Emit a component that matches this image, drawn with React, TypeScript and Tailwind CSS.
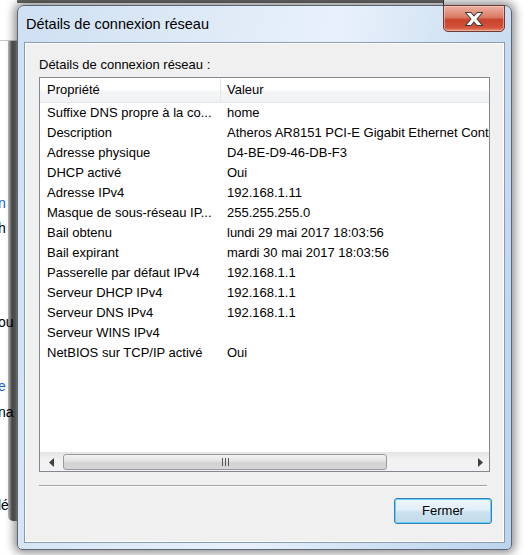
const rows: [string, string][] = [
  ["Suffixe DNS propre à la co...", "home"],
  ["Description", "Atheros AR8151 PCI-E Gigabit Ethernet Controller"],
  ["Adresse physique", "D4-BE-D9-46-DB-F3"],
  ["DHCP activé", "Oui"],
  ["Adresse IPv4", "192.168.1.11"],
  ["Masque de sous-réseau IP...", "255.255.255.0"],
  ["Bail obtenu", "lundi 29 mai 2017 18:03:56"],
  ["Bail expirant", "mardi 30 mai 2017 18:03:56"],
  ["Passerelle par défaut IPv4", "192.168.1.1"],
  ["Serveur DHCP IPv4", "192.168.1.1"],
  ["Serveur DNS IPv4", "192.168.1.1"],
  ["Serveur WINS IPv4", ""],
  ["NetBIOS sur TCP/IP activé", "Oui"],
];

// fragments of the window lying behind the dialog
const behind: { top: number; text: string; blue?: boolean }[] = [
  { top: 196, text: "n", blue: true },
  { top: 221, text: "h" },
  { top: 315, text: "ou" },
  { top: 379, text: "e", blue: true },
  { top: 405, text: "na" },
  { top: 498, text: "lé" },
];

function CloseGlyph() {
  return (
    <svg width="20" height="16" viewBox="0 0 20 16">
      <polygon
        points="1.5,1.5 7,1.5 10,5 13,1.5 18.5,1.5 13,8 18.5,14.5 13,14.5 10,11 7,14.5 1.5,14.5 7,8"
        fill="#ffffff"
        stroke="#3e3e3e"
        strokeWidth="1.1"
        strokeLinejoin="round"
      />
    </svg>
  );
}

function ScrollBar() {
  return (
    <div className="flex h-[19px] items-stretch border-t border-[#e6e6e6] bg-[linear-gradient(180deg,#e6e6e6_0%,#f2f2f2_40%,#f2f2f2_100%)]">
      <div className="flex w-[23px] items-center justify-center">
        <svg width="5" height="9" viewBox="0 0 5 9">
          <polygon points="5,0 0,4.5 5,9" fill="#404040" />
        </svg>
      </div>
      <div className="my-[1px] flex w-[324px] items-center justify-center rounded-[3px] border border-[#9a9a9a] bg-[linear-gradient(180deg,#f3f3f3_0%,#e2e2e2_45%,#d2d2d2_55%,#d6d6d6_100%)]">
        <div className="flex gap-[2px]">
          <span className="h-[8px] w-[1px] bg-[#5a5a5a]" />
          <span className="h-[8px] w-[1px] bg-[#5a5a5a]" />
          <span className="h-[8px] w-[1px] bg-[#5a5a5a]" />
        </div>
      </div>
      <div className="flex-1" />
      <div className="flex w-[18px] items-center justify-center">
        <svg width="5" height="9" viewBox="0 0 5 9">
          <polygon points="0,0 5,4.5 0,9" fill="#404040" />
        </svg>
      </div>
    </div>
  );
}

export default function App() {
  return (
    <div className="relative h-[555px] w-[528px] overflow-hidden bg-white font-['Liberation_Sans',Arial,sans-serif] text-[13px] text-black">
      {/* window behind */}
      <div className="absolute left-0 top-[40px] h-px w-[17px] bg-[#c8c8c8]" />
      <div className="absolute left-[17px] top-0 h-[3px] w-[427px] bg-[#6b6b6b]" />
      <div className="absolute left-[443px] top-0 h-[6px] w-px bg-[#3a3a3a]" />
      <div className="absolute left-[8px] top-[41px] h-[480px] w-[9px] rounded-bl-[5px] bg-[linear-gradient(90deg,#c4c4c4_0%,#555555_45%,#6e6e6e_80%,#a0a0a0_100%)]" />
      {behind.map((b) => (
        <span
          key={b.top}
          className={`absolute left-[-2px] text-[14px] leading-none ${b.blue ? "text-[#1c5bd0]" : "text-black"}`}
          style={{ top: b.top }}
        >
          {b.text}
        </span>
      ))}

      {/* dialog */}
      <div className="absolute left-[17px] top-[5px] flex h-[545px] w-[495px] flex-col rounded-t-[7px] rounded-b-[5px] border border-[#5b6677] bg-[linear-gradient(100deg,#cfe0f3_0%,#dde9f6_30%,#e8f1fb_55%,#cddff2_80%,#bcd4ee_100%)] shadow-[0_0_10px_3px_rgba(0,0,0,0.45)]">
        <div className="relative flex h-[36px] shrink-0 items-center pl-[8px] pt-[2px]">
          <span className="text-[14.5px] text-black">Détails de connexion réseau</span>
          <div className="absolute left-[425px] top-[-1px] flex h-[27px] w-[62px] items-center justify-center rounded-b-[5px] border border-[#6b3a33] bg-[linear-gradient(180deg,#ecb0a3_0%,#dc7a65_45%,#c9432a_55%,#d3513a_85%,#e48a6a_100%)] shadow-[inset_0_0_0_1px_rgba(255,220,210,0.5)]">
            <CloseGlyph />
          </div>
        </div>

        <div className="mx-[6px] mb-[6px] flex flex-1 flex-col border border-[#8b9bb0] bg-[#f0f0f0] px-[14px] shadow-[inset_0_0_0_1px_#ffffff]">
          <div className="pt-[14px] leading-[16px]">Détails de connexion réseau :</div>
          <div className="mt-[4px] flex h-[395px] w-[451px] flex-col overflow-hidden border border-[#828790] bg-white">
            <div className="flex h-[25px] shrink-0 border-b border-[#e5e5e5] bg-[linear-gradient(180deg,#ffffff_0%,#ffffff_50%,#f4f5f7_55%,#f1f2f4_100%)] leading-[24px]">
              <div className="w-[181px] shrink-0 border-r border-[#e5e5e5] pl-[7px]">Propriété</div>
              <div className="pl-[6px]">Valeur</div>
            </div>
            <div className="flex-1">
              {rows.map(([name, value]) => (
                <div key={name} className="flex h-[20px] items-center whitespace-nowrap">
                  <div className="w-[182px] shrink-0 pl-[7px]">{name}</div>
                  <div className="pl-[5px]">{value}</div>
                </div>
              ))}
            </div>
            <ScrollBar />
          </div>
          <div className="mt-[13px] h-px w-[448px] bg-[#a0a0a0] shadow-[0_1px_0_#ffffff]" />
          <div className="mt-[12px] flex justify-end">
            <button
              type="button"
              className="mr-[-2px] h-[26px] w-[98px] rounded-[3px] border border-[#3c7fb1] bg-[linear-gradient(180deg,#eef7fc_0%,#e1eff8_45%,#cae2f0_55%,#c3dbe9_100%)] text-[13px] text-black shadow-[inset_0_0_0_1px_#62d2fb]"
            >
              Fermer
            </button>
          </div>
        </div>
      </div>
    </div>
  );
}
